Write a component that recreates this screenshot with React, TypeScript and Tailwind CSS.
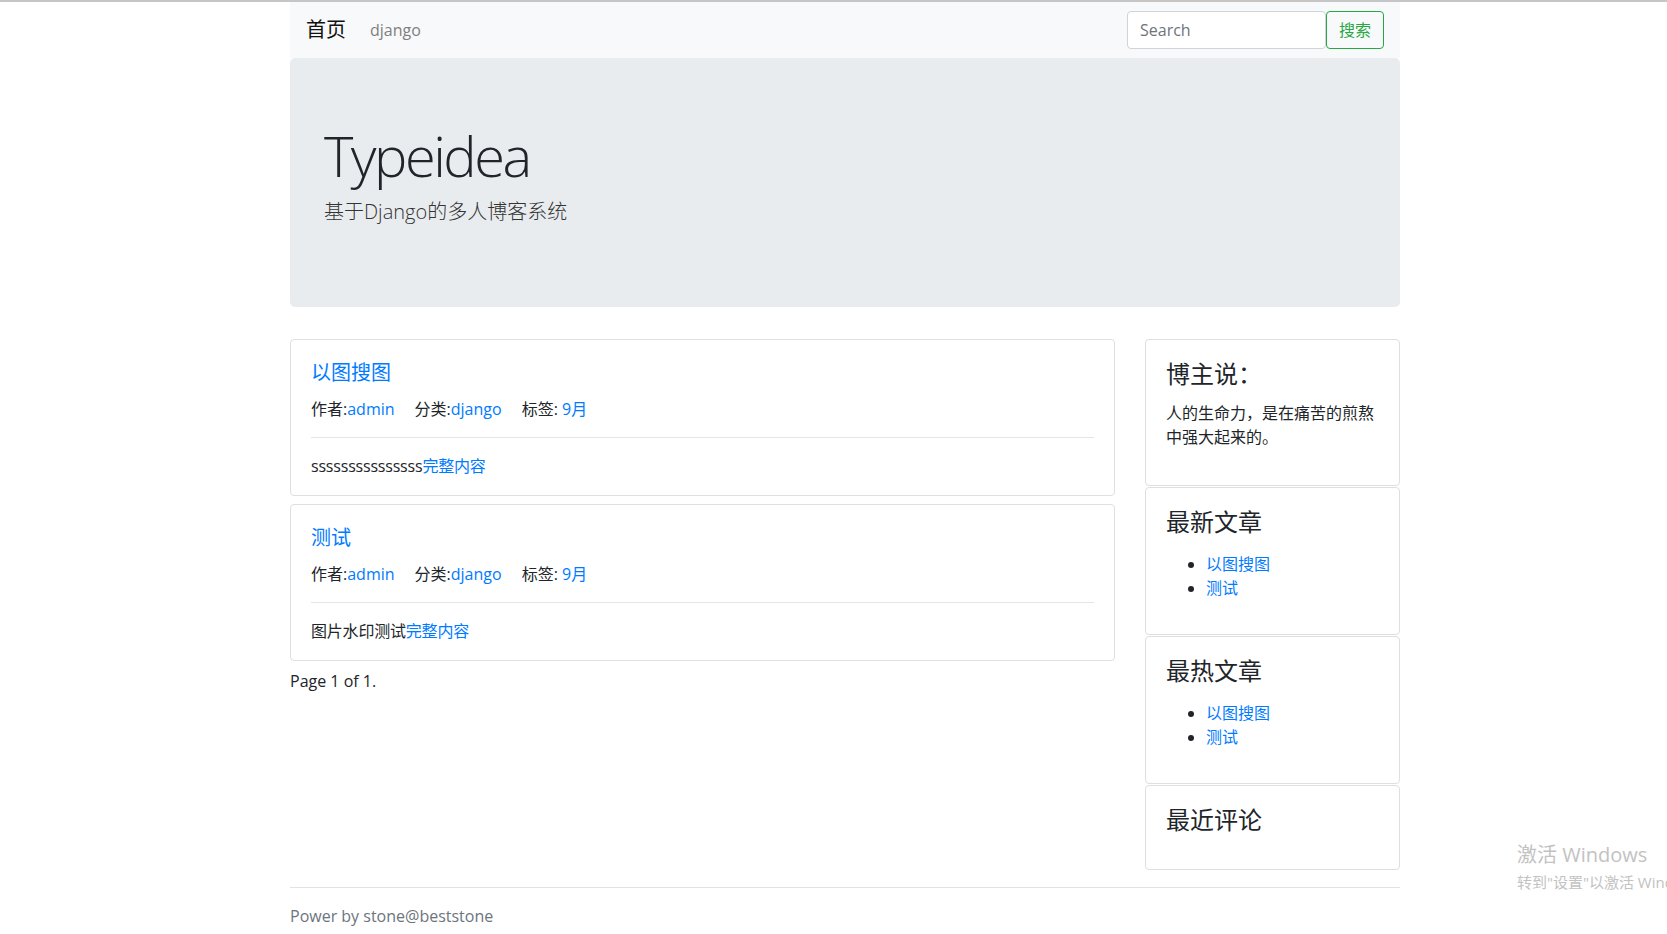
const posts = [
  { title: "以图搜图", excerpt: "sssssssssssssss" },
  { title: "测试", excerpt: "图片水印测试" },
];

function SideCard({ title, first, children }: { title: string; first?: boolean; children?: React.ReactNode }) {
  return (
    <div className="border border-[#dfdfdf] rounded bg-white px-5 pt-5 pb-5 mb-px">
      <h4 className={first ? "text-[24px] leading-[1.2] mb-3 text-[#212529]" : "text-[24px] leading-[1.2] mb-[15px] text-[#212529]"}>
        {title}
      </h4>
      {children}
    </div>
  );
}

function LinkList() {
  return (
    <ul className="list-disc pl-10 mb-[14px]">
      <li><a className="text-[#007bff]">以图搜图</a></li>
      <li><a className="text-[#007bff]">测试</a></li>
    </ul>
  );
}

export default function App() {
  return (
    <div className="relative min-h-[934px] overflow-hidden bg-white text-[16px] leading-6 text-[#212529] font-['Open_Sans','Noto_Sans_CJK_SC',sans-serif]">
      <div className="h-[2px] bg-[#c6c6c6]" />

      <div className="ml-[290px] w-[1110px]">
        {/* navbar */}
        <nav className="h-14 bg-[#f8f9fa] px-4 flex items-center">
          <a className="text-[20px] leading-[30px] text-[#111] mr-4">首页</a>
          <a className="px-2 text-[#808080]">django</a>
          <form className="ml-auto flex items-center">
            <input
              placeholder="Search"
              className="w-[199px] h-[38px] px-3 border border-[#ced4da] rounded bg-white text-[#495057] placeholder:text-[#6c757d] outline-none"
            />
            <button className="h-[38px] w-[58px] border border-[#28a745] rounded text-[#28a745] bg-transparent">
              搜索
            </button>
          </form>
        </nav>

        {/* jumbotron */}
        <div className="bg-[#e9ecef] rounded-[5px] px-[34px] pt-16 pb-16 mb-8">
          <h1 className="text-[56px] leading-[1.2] font-light tracking-[-2.5px] mb-2 text-[#212529]">Typeidea</h1>
          <p className="text-[20px] leading-[30px] font-light mb-4 text-[#333]">基于Django的多人博客系统</p>
        </div>

        {/* content */}
        <div className="grid grid-cols-[825px_255px] gap-x-[30px] items-start">
          <div>
            {posts.map((p) => (
              <div key={p.title} className="border border-[#dfdfdf] rounded mb-2 px-5 pt-[21px] pb-[17px]">
                <h5 className="text-[20px] leading-6 mb-3 text-[#007bff]">{p.title}</h5>
                <div className="flex gap-5">
                  <span>
                    作者:<a className="text-[#007bff]">admin</a>
                  </span>
                  <span>
                    分类:<a className="text-[#007bff]">django</a>
                  </span>
                  <span>
                    标签: <a className="text-[#007bff]">9月</a>
                  </span>
                </div>
                <hr className="my-4 border-t border-[#e5e5e5]" />
                <p className="tracking-[-0.2px]">
                  {p.excerpt}
                  <a className="text-[#007bff]">完整内容</a>
                </p>
              </div>
            ))}
            <p>Page 1 of 1.</p>
          </div>

          <div>
            <SideCard title="博主说：" first>
              <p className="mb-4">人的生命力，是在痛苦的煎熬中强大起来的。</p>
            </SideCard>
            <SideCard title="最新文章">
              <LinkList />
            </SideCard>
            <SideCard title="最热文章">
              <LinkList />
            </SideCard>
            <SideCard title="最近评论" />
          </div>
        </div>

        {/* footer */}
        <footer className="mt-4">
          <hr className="border-t border-[#e2e2e2]" />
          <p className="mt-4 text-[#6c757d]">Power by stone@beststone</p>
        </footer>
      </div>

      {/* windows activation watermark */}
      <div className="absolute left-[1517px] top-[841px] whitespace-nowrap text-[#c2c2c2] font-['Open_Sans','Noto_Sans_CJK_SC',sans-serif]">
        <div className="text-[20px] leading-[28px]">激活 Windows</div>
        <div className="text-[15px] leading-[20px] mt-[3px]">转到"设置"以激活 Windows。</div>
      </div>
    </div>
  );
}
